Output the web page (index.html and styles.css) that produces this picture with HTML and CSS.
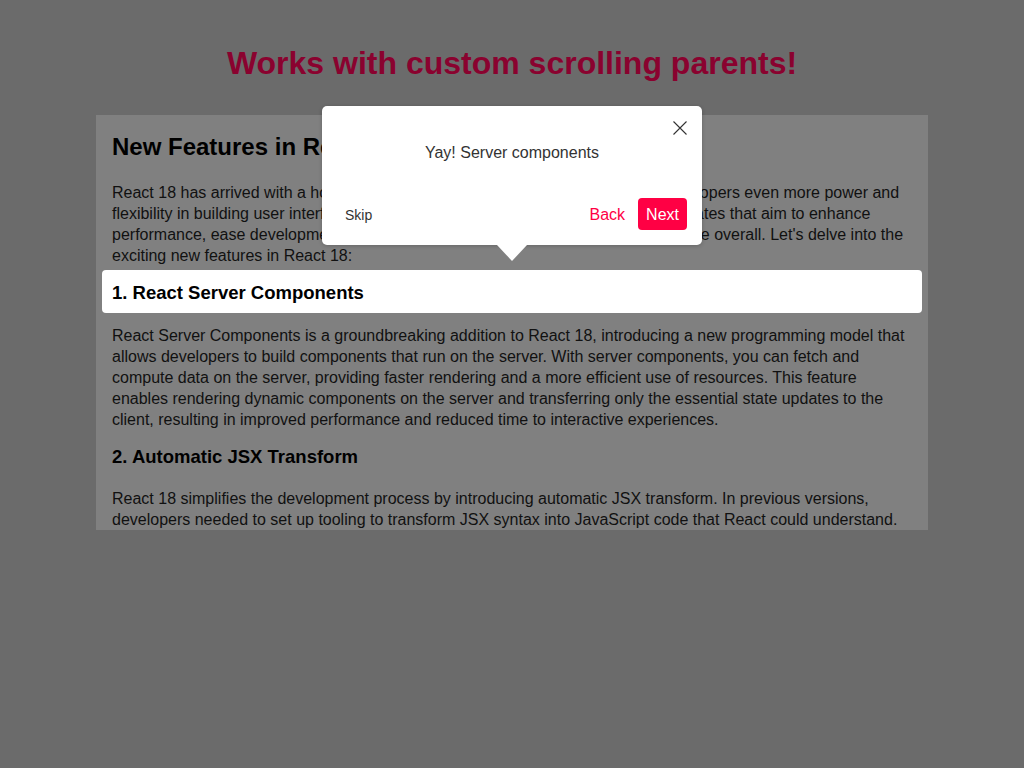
FILE: index.html
```html
<!DOCTYPE html>
<html lang="en">
<head>
<meta charset="utf-8">
<title>Works with custom scrolling parents!</title>
<link rel="stylesheet" href="styles.css">
</head>
<body>
<main class="page">
  <h1 class="page-title">Works with custom scrolling parents!</h1>
  <section class="scroller">
    <h2 class="article-title">New Features in React 18</h2>
    <p class="para">React 18 has arrived with a host of exciting new features that promise to give developers even more power and flexibility in building user interfaces. This release includes numerous important updates that aim to enhance performance, ease development, and significantly improve the developer experience overall. Let's delve into the exciting new features in React 18:</p>
    <h3 class="section-title spotlit">1. React Server Components</h3>
    <p class="para">React Server Components is a groundbreaking addition to React 18, introducing a new programming model that allows developers to build components that run on the server. With server components, you can fetch and compute data on the server, providing faster rendering and a more efficient use of resources. This feature enables rendering dynamic components on the server and transferring only the essential state updates to the client, resulting in improved performance and reduced time to interactive experiences.</p>
    <h3 class="section-title">2. Automatic JSX Transform</h3>
    <p class="para">React 18 simplifies the development process by introducing automatic JSX transform. In previous versions, developers needed to set up tooling to transform JSX syntax into JavaScript code that React could understand. With React 18, this transformation happens automatically, reducing configuration overhead and making it easier to get started.</p>
  </section>

  <div class="tooltip" role="dialog">
    <button class="tooltip-close" aria-label="Close">
      <svg width="14" height="14" viewBox="0 0 14 14"><path d="M0.5 0.5 L13.5 13.5 M13.5 0.5 L0.5 13.5" stroke="#333" stroke-width="1.1" fill="none"/></svg>
    </button>
    <div class="tooltip-content">Yay! Server components</div>
    <div class="tooltip-footer">
      <button class="btn-skip">Skip</button>
      <button class="btn-back">Back</button>
      <button class="btn-next">Next</button>
    </div>
    <span class="tooltip-arrow"></span>
  </div>
</main>
</body>
</html>
```

FILE: styles.css
```css
* { box-sizing: border-box; }
html, body { margin: 0; padding: 0; }
body {
  background: #6b6b6b;
  font-family: "Liberation Sans", Arial, Helvetica, sans-serif;
  color: #111;
  width: 1024px;
  height: 768px;
  overflow: hidden;
}
.page {
  position: relative;
  padding-top: 44px;
  display: flex;
  flex-direction: column;
  align-items: center;
}
.page-title {
  margin: 0 0 33px;
  font-size: 32px;
  line-height: 38px;
  font-weight: bold;
  color: #8a022f;
  text-align: center;
}
.scroller {
  width: 832px;
  height: 415px;
  background: #808080;
  padding: 18px 16px 0;
  overflow: hidden;
}
.article-title {
  margin: 0 0 21px;
  font-size: 24px;
  line-height: 28px;
  font-weight: bold;
  color: #000;
}
.para {
  margin: 0;
  font-size: 16px;
  line-height: 21px;
  color: #111;
}
.section-title {
  margin: 15px 0 20px;
  font-size: 18.5px;
  line-height: 23px;
  font-weight: bold;
  color: #000;
}
.spotlit {
  background: #fff;
  border-radius: 4px;
  margin: 4px -10px 12px;
  padding: 11px 10px 9px;
}
.tooltip {
  position: absolute;
  left: 322px;
  top: 106px;
  width: 380px;
  padding: 15px;
  background: #fff;
  border-radius: 5px;
  box-shadow: 0 1px 4px rgba(0, 0, 0, 0.2);
  color: #333;
  font-size: 16px;
}
.tooltip-close {
  position: absolute;
  right: 0;
  top: 0;
  padding: 15px;
  border: 0;
  background: transparent;
  line-height: 0;
  cursor: pointer;
}
.tooltip-content {
  padding: 21px 10px 19px;
  text-align: center;
  line-height: 21px;
  color: #333;
}
.tooltip-footer {
  margin-top: 16px;
  display: flex;
  align-items: center;
}
.tooltip-footer button {
  font-family: inherit;
  border: 0;
  background: transparent;
  cursor: pointer;
}
.btn-skip {
  color: #333;
  font-size: 14px;
  line-height: 16px;
  padding: 9px 8px 7px;
}
.btn-back {
  margin-left: auto;
  margin-right: 5px;
  color: #ff0044;
  font-size: 16px;
  line-height: 16px;
  padding: 9px 8px 7px;
}
.tooltip-footer .btn-next {
  background: #ff0044;
  color: #fff;
  font-size: 16px;
  line-height: 16px;
  padding: 9px 8px 7px;
  border-radius: 4px;
}
.tooltip-arrow {
  position: absolute;
  left: 175px;
  top: 100%;
  width: 0;
  height: 0;
  border-left: 15px solid transparent;
  border-right: 15px solid transparent;
  border-top: 16px solid #fff;
}
```
